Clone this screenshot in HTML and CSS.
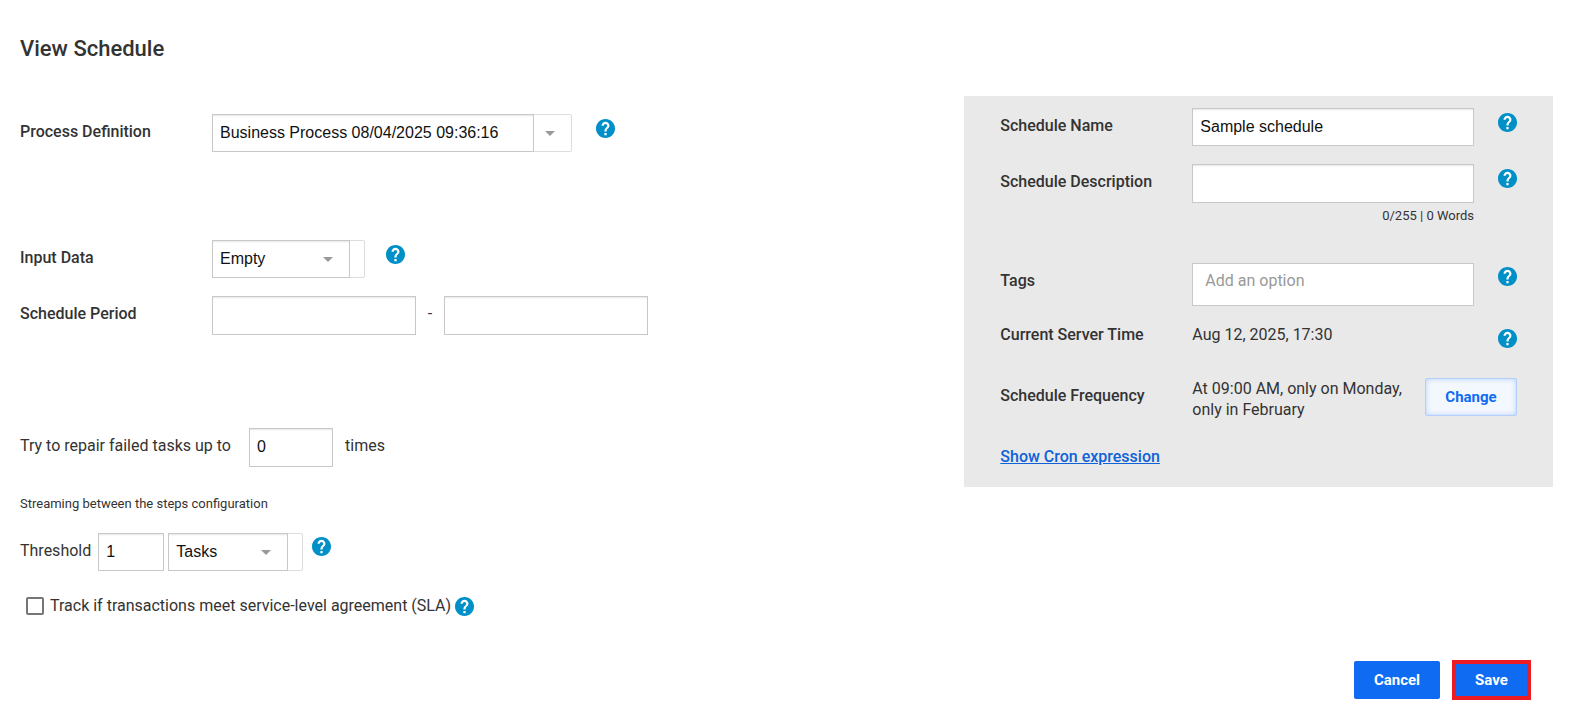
FILE: index.html
```html
<!DOCTYPE html>
<html lang="en">
<head>
    <meta charset="UTF-8">
    <meta name="viewport" content="width=device-width, initial-scale=1.0">
    <title>View Schedule</title>
    <link rel="stylesheet" href="styles.css">
</head>
<body>
    <!-- Shared help icon -->
    <svg class="sprite" aria-hidden="true">
        <symbol id="help" viewBox="2 2 20 20">
            <circle cx="12" cy="12" r="9" fill="#fff"/>
            <path d="M12 2C6.48 2 2 6.48 2 12s4.48 10 10 10 10-4.48 10-10S17.52 2 12 2zm1.2 17h-2.4v-2.2h2.4V19zm1.9-7.6l-.9.92C13.5 13 13.2 13.6 13.2 15.2h-2.4v-.7c0-1.1.45-2.1 1.17-2.83l1.24-1.26c.37-.36.59-.86.59-1.41 0-1-.8-1.8-1.8-1.8s-1.8.8-1.8 1.8H7.8c0-2.3 1.9-4.2 4.2-4.2s4.2 1.9 4.2 4.2c0 .92-.5 1.78-1.1 2.4z" fill="#0090c8"/>
        </symbol>
    </svg>

    <form class="page">
        <h1>View Schedule</h1>

        <div class="columns">
            <main class="settings">
                <div class="row process">
                    <label class="name" for="process">Process Definition</label>
                    <div class="combo">
                        <input type="text" id="process" value="Business Process 08/04/2025 09:36:16">
                        <button type="button" class="combo-toggle" aria-label="Show processes"></button>
                    </div>
                    <button type="button" class="help far" aria-label="Help"><svg><use href="#help"/></svg></button>
                </div>

                <div class="row">
                    <label class="name" for="inputData">Input Data</label>
                    <div class="dropdown">
                        <select id="inputData" class="data-select">
                            <option>Empty</option>
                        </select>
                    </div>
                    <button type="button" class="help" aria-label="Help"><svg><use href="#help"/></svg></button>
                </div>

                <div class="row period">
                    <label class="name" for="periodFrom">Schedule Period</label>
                    <input type="text" id="periodFrom" class="date tall">
                    <span class="dash">-</span>
                    <input type="text" class="date tall" aria-label="Schedule period end">
                </div>

                <div class="row repair">
                    <label for="repair">Try to repair failed tasks up to</label>
                    <input type="text" id="repair" class="count tall" value="0">
                    <span>times</span>
                </div>

                <p class="note">Streaming between the steps configuration</p>

                <div class="row threshold">
                    <label for="threshold">Threshold</label>
                    <input type="text" id="threshold" class="amount" value="1">
                    <div class="dropdown">
                        <select class="unit-select" aria-label="Threshold unit">
                            <option>Tasks</option>
                        </select>
                    </div>
                    <button type="button" class="help" aria-label="Help"><svg><use href="#help"/></svg></button>
                </div>

                <div class="sla">
                    <input type="checkbox" id="sla">
                    <label for="sla">Track if transactions meet service-level agreement (SLA)</label>
                    <button type="button" class="help" aria-label="Help"><svg><use href="#help"/></svg></button>
                </div>
            </main>

            <aside class="panel">
                <div class="panel-row">
                    <label class="name" for="scheduleName">Schedule Name</label>
                    <input type="text" id="scheduleName" value="Sample schedule">
                    <button type="button" class="help" aria-label="Help"><svg><use href="#help"/></svg></button>
                </div>

                <div class="panel-row description">
                    <label class="name" for="description">Schedule Description</label>
                    <div>
                        <input type="text" id="description" class="tall">
                        <p class="counter">0/255 | 0 Words</p>
                    </div>
                    <button type="button" class="help" aria-label="Help"><svg><use href="#help"/></svg></button>
                </div>

                <div class="panel-row tags">
                    <label class="name" for="tags">Tags</label>
                    <input type="text" id="tags" placeholder="Add an option">
                    <button type="button" class="help" aria-label="Help"><svg><use href="#help"/></svg></button>
                </div>

                <div class="panel-row time">
                    <span class="name">Current Server Time</span>
                    <span>Aug 12, 2025, 17:30</span>
                    <button type="button" class="help" aria-label="Help"><svg><use href="#help"/></svg></button>
                </div>

                <div class="panel-row frequency">
                    <span class="name">Schedule Frequency</span>
                    <p>At 09:00 AM, only on Monday, only in February</p>
                    <button type="button" class="btn btn-light">Change</button>
                </div>

                <a href="#" class="cron">Show Cron expression</a>
            </aside>
        </div>

        <footer class="actions">
            <button type="button" class="btn">Cancel</button>
            <button type="submit" class="btn btn-save">Save</button>
        </footer>
    </form>
</body>
</html>
```
FILE: styles.css
```css
* {
    box-sizing: border-box;
}

body {
    margin: 0;
    background-color: #fff;
    color: #333;
    font-family: Roboto, sans-serif;
    font-size: 16px;
    line-height: 36px;
}

h1 {
    margin: 0;
    font-size: 22px;
    font-weight: 500;
    line-height: 32px;
}

p {
    margin: 0;
}

.sprite {
    display: none;
}

.page {
    padding: 33px 21px 8px 20px;
}

.columns {
    display: grid;
    grid-template-columns: 77fr 48fr;
    align-items: start;
    margin-top: 31px;
}

.settings {
    padding-top: 18px;
}

/* Fields */
input[type="text"],
select {
    height: 38px;
    padding: 0 7px;
    border: 1px solid #c8c8c8;
    border-radius: 0;
    background-color: #fff;
    box-shadow: inset 0 2px 2px -1px rgba(0, 0, 0, 0.1);
    color: #111;
    font-family: "Liberation Sans", Arial, sans-serif;
    font-size: 16px;
}

input[type="text"].tall {
    height: 39px;
    padding-bottom: 2px;
}

select {
    display: block;
    padding-bottom: 2px;
    appearance: none;
}

.row {
    display: flex;
    align-items: flex-start;
    margin-bottom: 18px;
}

.name {
    font-weight: 500;
}

.row .name {
    flex: 0 0 192px;
}

.process {
    margin-bottom: 88px;
}

.combo {
    display: flex;
}

.combo input {
    width: 322px;
}

.combo-toggle {
    position: relative;
    width: 38px;
    height: 38px;
    padding: 0;
    border: 1px solid #ddd;
    border-left: 0;
    border-radius: 0 2px 2px 0;
    background-color: #fff;
}

.dropdown {
    position: relative;
    padding-right: 14px;
    border-right: 1px solid #ddd;
    border-radius: 0 2px 2px 0;
    box-shadow: inset 0 1px #ddd, inset 0 -1px #ddd;
}

/* Arrow drawn over the field */
.combo-toggle::after,
.dropdown::after {
    content: "";
    position: absolute;
    top: 16px;
    right: 16px;
    border: 5px solid transparent;
    border-top-color: #999;
    border-bottom: 0;
    pointer-events: none;
}

.dropdown::after {
    top: 17px;
    right: 31px;
}

.data-select {
    width: 138px;
}

.unit-select {
    width: 120px;
}

.help {
    width: 19px;
    height: 19px;
    margin: 5px 0 0 21px;
    padding: 0;
    border: 0;
    background: none;
    cursor: pointer;
}

.help.far {
    margin-left: 24px;
}

.help svg {
    display: block;
    width: 19px;
    height: 19px;
}

.date {
    width: 204px;
}

.dash {
    width: 28px;
    text-align: center;
}

.period {
    margin-bottom: 93px;
}

.repair {
    margin-bottom: 27px;
}

.row .count {
    width: 84px;
    margin: 0 12px 0 18px;
}

.note {
    margin-bottom: 19px;
    font-size: 13px;
    line-height: 20px;
}

.threshold {
    margin-bottom: 25px;
}

.row .amount {
    width: 66px;
    margin: 0 4px 0 7px;
}

.threshold .help {
    margin: 4px 0 0 9px;
}

.sla {
    display: flex;
    align-items: center;
    padding-left: 6px;
    line-height: 20px;
}

.sla input {
    appearance: none;
    width: 18px;
    height: 18px;
    margin: 0 6px 0 0;
    border: 2px solid #767676;
    border-radius: 2px;
    background-color: #fff;
}

.sla .help {
    margin: 0 0 0 4px;
}

/* Right panel */
.panel {
    padding: 12px 36px 20px;
    background-color: #e9e9e9;
}

.panel-row {
    display: grid;
    grid-template-columns: 192px 1fr 43px;
    align-items: start;
    margin-bottom: 18px;
}

.panel-row input[type="text"] {
    display: block;
    width: 100%;
}

.panel-row .help {
    margin-left: 24px;
}

.counter {
    margin-top: 5px;
    font-size: 13px;
    line-height: 16px;
    text-align: right;
}

.description {
    margin-bottom: 39px;
}

.tags {
    margin-bottom: 11px;
}

.tags input[type="text"] {
    height: 43px;
    padding: 0 12px 8px;
    box-shadow: none;
    font-family: Roboto, sans-serif;
}

.tags input::placeholder {
    color: #999;
}

.panel .tags .help {
    margin-top: 4px;
}

.time {
    margin-bottom: 25px;
}

.time .help {
    margin-top: 12px;
}

.frequency {
    grid-template-columns: 192px 1fr 92px;
    margin-bottom: 27px;
}

.frequency p {
    padding-right: 16px;
    line-height: 21px;
}

.cron {
    display: block;
    color: #0f62d8;
    font-weight: 500;
    line-height: 20px;
}

/* Buttons */
.btn {
    height: 38px;
    padding: 0 19px;
    border: 0;
    border-radius: 2px;
    background-color: #0f6bf2;
    color: #fff;
    font-family: Roboto, sans-serif;
    font-size: 15px;
    font-weight: 700;
    cursor: pointer;
}

.actions .btn {
    min-width: 86px;
}

.btn-light {
    padding: 0;
    border: 1px solid #b3cffb;
    background-color: #f3f7fe;
    box-shadow: inset 0 0 5px #b3cffb;
    color: #0f6bf2;
}

.actions .btn-save {
    height: 40px;
    min-width: 79px;
    padding: 0 16px;
    border: 4px solid #ec1c24;
    border-radius: 0;
}

.actions {
    display: flex;
    justify-content: flex-end;
    align-items: center;
    gap: 12px;
    margin-top: 44px;
    padding-right: 22px;
}
```
